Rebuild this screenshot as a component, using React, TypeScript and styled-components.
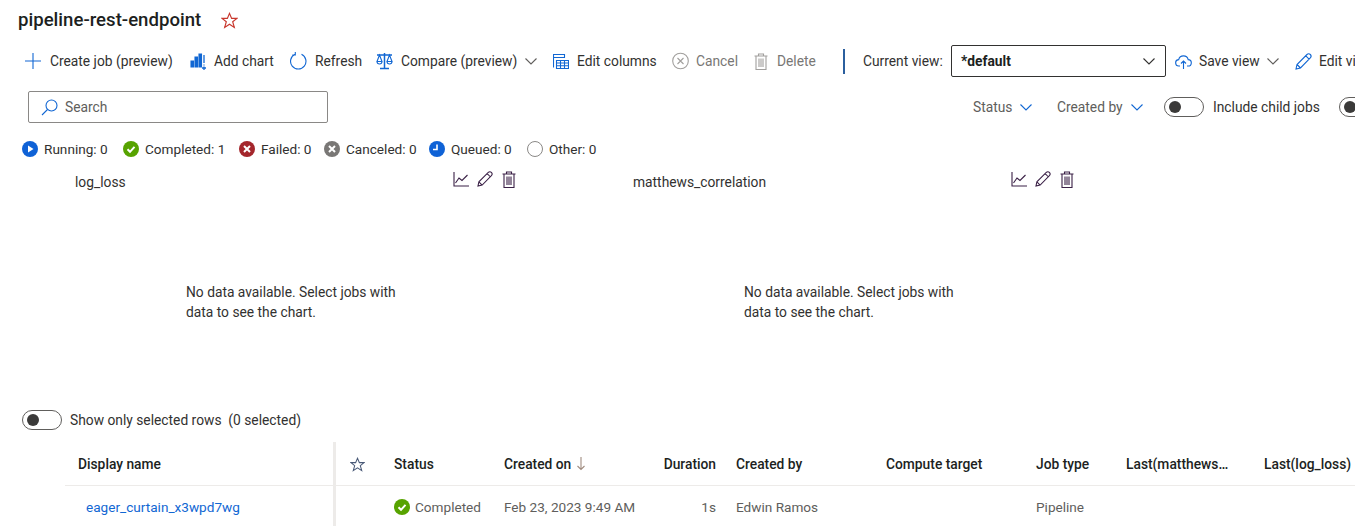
import styled, { createGlobalStyle } from "styled-components";

const GlobalStyle = createGlobalStyle`
  html, body {
    margin: 0;
    background: #fff;
  }
  body {
    font-family: Roboto, "Liberation Sans", sans-serif;
    font-size: 13.800px;
    color: #323130;
  }
`;

const BLUE = "#1267d3";

const Icon = styled.svg.attrs({ fill: "none" })<{ $color?: string }>`
  display: block;
  flex: none;
  stroke: ${(p) => p.$color || BLUE};
  stroke-width: 1.100;
`;

const PlusIcon = () => (
  <Icon width="18" height="18" viewBox="0 0 18 18" strokeWidth="1.4">
    <path d="M9 1v16M1 9h16" />
  </Icon>
);

const ChartIcon = () => (
  <Icon width="16" height="18" viewBox="0 0 16 18">
    <path d="M1 9h2.500v6H1zM5 5h2.500v10H5zM9 2h2.500v13H9z" fill={BLUE} />
    <path d="M14 3v8M14 12.500v1M12 16h4M14 14.500v3.500" strokeWidth="1.300" />
  </Icon>
);

const RefreshIcon = () => (
  <Icon width="17" height="18" viewBox="0 0 17 18">
    <path d="M5 2.300a7.700 7.700 0 1 0 6.500 0M5.300 0v3H2.300" />
  </Icon>
);

const CompareIcon = () => (
  <Icon width="17" height="18" viewBox="0 0 17 18">
    <path d="M1 3h15M8.500 1v15M4 16.500h9" strokeWidth="1.500" />
    <path d="M3.500 3 1 9.500h5zM13.500 3 11 9.500h5zM1 9.500a2.500 2.500 0 0 0 5 0M11 9.500a2.500 2.500 0 0 0 5 0" />
  </Icon>
);

const ColumnsIcon = () => (
  <Icon width="16" height="17" viewBox="0 0 16 17" strokeWidth="1.300">
    <path d="M.5 1.500h11v3H.5zM.5 4.500v10M3.500 7.500h12v8h-12zM3.500 10h12M3.500 12.700h12M7.500 7.500v8M11.500 7.500v8" />
  </Icon>
);

const CancelIcon = () => (
  <Icon width="17" height="18" viewBox="0 0 17 18" $color="#a19f9d">
    <circle cx="8.500" cy="9" r="7.800" />
    <path d="m5.500 6 6 6M11.500 6l-6 6" />
  </Icon>
);

const TrashIcon = ({ color }: { color: string }) => (
  <Icon width="16" height="17" viewBox="0 0 16 17" $color={color}>
    <path d="M1.500 3h13M5.500 3V1h5v2M3 3v13.500h10V3M6 5.500v8.500M8 5.500v8.500M10 5.500v8.500" />
  </Icon>
);

const CloudIcon = () => (
  <Icon width="17" height="17" viewBox="0 0 17 17">
    <path d="M5 13H4a3.200 3.200 0 0 1-.3-6.400 4.900 4.900 0 0 1 9.500 0 3.200 3.200 0 0 1-.2 6.400h-1M8.500 16V8M6 10.500 8.500 8l2.500 2.500" />
  </Icon>
);

const PencilIcon = ({ color, size }: { color: string; size: number }) => (
  <Icon width={size} height={size} viewBox="0 0 17 17" $color={color} strokeWidth="1.300">
    <path d="M1 16l1-4.500L12 1.500a2.200 2.200 0 0 1 3.300 3.300L5.500 15zM2 11.500 5.500 15M10.800 2.800l3.300 3.300" />
  </Icon>
);

const LineChartIcon = () => (
  <Icon width="16" height="16" viewBox="0 0 16 16" $color="#3a2046">
    <path d="M1 1v14h15M2.500 12 6 7l3 2.500L14.500 4" />
  </Icon>
);

const SearchIcon = () => (
  <Icon width="17" height="17" viewBox="0 0 17 17">
    <circle cx="10.500" cy="6.500" r="5.500" />
    <path d="M6.500 10.500 1 16" />
  </Icon>
);

const StarIcon = ({ color, size }: { color: string; size: number }) => (
  <Icon width={size} height={size} viewBox="0 0 16 16" $color={color}>
    <path d="M8 1.300 10 6h5l-4 3.200 1.500 5.300L8 11.500l-4.500 3L5 9.200 1 6h5z" />
  </Icon>
);

const Chevron = ({ color }: { color: string }) => (
  <Icon width="12" height="12" viewBox="0 0 12 12" $color={color}>
    <path d="M.5 3.500 6 9l5.500-5.500" />
  </Icon>
);

const Page = styled.div`
  width: 1355px;
  height: 526px;
  overflow: hidden;
  display: flex;
  flex-direction: column;
`;

const TitleRow = styled.div`
  display: flex;
  align-items: center;
  gap: 20px;
  padding: 8px 0 0 18px;
  height: 25px;
`;

const Title = styled.h1`
  margin: 0;
  font-size: 18.600px;
  font-weight: 500;
  color: #201f1e;
`;

const Toolbar = styled.div`
  display: flex;
  align-items: center;
  height: 32px;
  margin-top: 13px;
  padding-left: 24px;
  white-space: nowrap;
`;

const ToolButton = styled.div<{ $disabled?: boolean; $width: number; $gap?: number }>`
  display: flex;
  align-items: center;
  flex: none;
  gap: ${(p) => p.$gap ?? 8}px;
  width: ${(p) => p.$width}px;
  color: ${(p) => (p.$disabled ? "#797775" : "#323130")};
`;

const ToolDivider = styled.div`
  flex: none;
  width: 2px;
  height: 25px;
  background: #2b5f9e;
  margin: 0 18px 0 9px;
`;

const ViewLabel = styled.span`
  flex: none;
  width: 88px;
`;

const ViewSelect = styled.div`
  flex: none;
  box-sizing: border-box;
  display: flex;
  align-items: center;
  justify-content: space-between;
  width: 215px;
  height: 32px;
  margin-right: 9px;
  padding: 0 10px 0 9px;
  border: 1px solid #323130;
  border-radius: 2px;
  font-weight: 700;
  color: #201f1e;
`;

const FilterRow = styled.div`
  display: flex;
  align-items: center;
  height: 32px;
  margin-top: 14px;
  padding-left: 28px;
  white-space: nowrap;
`;

const SearchBox = styled.div`
  flex: none;
  box-sizing: border-box;
  display: flex;
  align-items: center;
  gap: 7px;
  width: 300px;
  height: 32px;
  padding-left: 12px;
  border: 1px solid #8a8886;
  border-radius: 2px;
  color: #605e5c;
`;

const Filters = styled.div`
  display: flex;
  align-items: center;
  margin-left: 645px;
  color: #605e5c;
`;

const FilterItem = styled.div<{ $width: number }>`
  display: flex;
  align-items: center;
  gap: 8px;
  flex: none;
  width: ${(p) => p.$width}px;
`;

const Toggle = styled.span`
  position: relative;
  flex: none;
  box-sizing: border-box;
  display: block;
  width: 40px;
  height: 20px;
  border: 1px solid #605e5c;
  border-radius: 10px;

  &::after {
    content: "";
    position: absolute;
    top: 3px;
    left: 4px;
    width: 12px;
    height: 12px;
    border-radius: 50%;
    background: #3b3a39;
  }
`;

const ToggleLabel = styled.span`
  flex: none;
  margin: 0 19px 0 9px;
  color: #323130;
`;

const StatusRow = styled.div`
  display: flex;
  align-items: center;
  height: 20px;
  margin-top: 16px;
  padding-left: 22px;
  font-size: 13.600px;
  white-space: nowrap;
`;

const StatusItem = styled.div<{ $width: number }>`
  display: flex;
  align-items: center;
  gap: 6px;
  flex: none;
  width: ${(p) => p.$width}px;
`;

const StatusDot = styled.svg.attrs({ viewBox: "0 0 16 16" })`
  display: block;
  flex: none;
  width: 16px;
  height: 16px;
`;

const RunningDot = () => (
  <StatusDot>
    <circle cx="8" cy="8" r="8" fill="#0f62d6" />
    <path d="M6 4.500v7L11.500 8z" fill="#fff" />
  </StatusDot>
);

const CompletedDot = () => (
  <StatusDot>
    <circle cx="8" cy="8" r="8" fill="#57a300" />
    <path d="M4.500 8.300 7 10.800l4.500-5" fill="none" stroke="#fff" strokeWidth="2" />
  </StatusDot>
);

const CrossDot = ({ color }: { color: string }) => (
  <StatusDot>
    <circle cx="8" cy="8" r="8" fill={color} />
    <path d="m5 5 6 6M11 5l-6 6" fill="none" stroke="#fff" strokeWidth="2" />
  </StatusDot>
);

const QueuedDot = () => (
  <StatusDot>
    <circle cx="8" cy="8" r="8" fill="#0f62d6" />
    <path d="M8 3.500V8.500H4" fill="none" stroke="#fff" strokeWidth="1.600" />
  </StatusDot>
);

const OtherDot = () => (
  <StatusDot>
    <circle cx="8" cy="8" r="7.500" fill="#fff" stroke="#8a8886" />
  </StatusDot>
);

const statuses = [
  { label: "Running: 0", dot: <RunningDot />, width: 101 },
  { label: "Completed: 1", dot: <CompletedDot />, width: 116 },
  { label: "Failed: 0", dot: <CrossDot color="#a4262c" />, width: 85 },
  { label: "Canceled: 0", dot: <CrossDot color="#797775" />, width: 105 },
  { label: "Queued: 0", dot: <QueuedDot />, width: 98 },
  { label: "Other: 0", dot: <OtherDot />, width: 90 },
];

const Charts = styled.div`
  display: flex;
  margin-top: 1px;
`;

const ChartCard = styled.section`
  flex: none;
  box-sizing: border-box;
  width: 558px;
  height: 250px;
  padding: 11px 0 0 75px;
`;

const ChartHeader = styled.div`
  display: flex;
  align-items: flex-start;
  width: 442px;
  color: #323130;
`;

const ChartName = styled.span`
  flex: 1;
  margin-top: 3px;
`;

const ChartActions = styled.div`
  display: flex;
  align-items: center;
  gap: 8px;
`;

const EmptyMessage = styled.p`
  width: 225px;
  margin: 92px 0 0 111px;
  line-height: 20px;
  color: #323130;
`;

const SelectedRow = styled.div`
  display: flex;
  align-items: center;
  height: 20px;
  padding-left: 22px;
  white-space: nowrap;

  ${ToggleLabel} {
    margin: 0 0 0 8px;
  }
`;

const TABLE_COLUMNS = "268px 3px 58px 110px 150px 82px 150px 150px 90px 138px 91px";

const HeaderRow = styled.div`
  display: grid;
  grid-template-columns: ${TABLE_COLUMNS};
  align-items: center;
  height: 42px;
  margin: 12px 0 0 65px;
  padding-top: 2px;
  border-bottom: 1px solid #edebe9;
  font-weight: 500;
  color: #201f1e;
  white-space: nowrap;
`;

const DataRow = styled.div`
  display: grid;
  grid-template-columns: ${TABLE_COLUMNS};
  align-items: center;
  height: 39px;
  margin-left: 65px;
  padding-top: 2px;
  font-size: 13.600px;
  color: #605e5c;
  white-space: nowrap;
`;

const ColumnDivider = styled.div`
  align-self: stretch;
  margin-top: -2px;
  background: #edebe9;
`;

const NameHeader = styled.div`
  padding-left: 13px;
`;

const StarCell = styled.div`
  padding-left: 14px;
`;

const SortCell = styled.div`
  display: flex;
  align-items: center;
  gap: 5px;
`;

const DurationCell = styled.div`
  padding-right: 20px;
  text-align: right;
`;

const NameLink = styled.a`
  padding-left: 21px;
  color: ${BLUE};
`;

const RowStatus = styled.div`
  display: flex;
  align-items: center;
  gap: 5px;
`;

const SortArrow = () => (
  <Icon width="10" height="14" viewBox="0 0 10 14" $color="#a08c80">
    <path d="M5 0v12.500M1.500 9 5 12.500 8.500 9" />
  </Icon>
);

const charts = ["log_loss", "matthews_correlation"];

export default function App() {
  return (
    <Page>
      <GlobalStyle />
      <TitleRow>
        <Title>pipeline-rest-endpoint</Title>
        <StarIcon color="#c8372d" size={17} />
      </TitleRow>

      <Toolbar>
        <ToolButton $width={166}><PlusIcon />Create job (preview)</ToolButton>
        <ToolButton $width={100}><ChartIcon />Add chart</ToolButton>
        <ToolButton $width={86}><RefreshIcon />Refresh</ToolButton>
        <ToolButton $width={177}><CompareIcon />Compare (preview)<Chevron color="#605e5c" /></ToolButton>
        <ToolButton $width={119}><ColumnsIcon />Edit columns</ToolButton>
        <ToolButton $width={81} $gap={7} $disabled><CancelIcon />Cancel</ToolButton>
        <ToolButton $width={81} $disabled><TrashIcon color="#a19f9d" />Delete</ToolButton>
        <ToolDivider />
        <ViewLabel>Current view:</ViewLabel>
        <ViewSelect>*default<Chevron color="#323130" /></ViewSelect>
        <ToolButton $width={120} $gap={7}><CloudIcon />Save view<Chevron color="#605e5c" /></ToolButton>
        <ToolButton $width={100} $gap={7}><PencilIcon color={BLUE} size={17} />Edit view</ToolButton>
      </Toolbar>

      <FilterRow>
        <SearchBox><SearchIcon />Search</SearchBox>
        <Filters>
          <FilterItem $width={84}>Status<Chevron color={BLUE} /></FilterItem>
          <FilterItem $width={107}>Created by<Chevron color={BLUE} /></FilterItem>
          <Toggle />
          <ToggleLabel>Include child jobs</ToggleLabel>
          <Toggle />
        </Filters>
      </FilterRow>

      <StatusRow>
        {statuses.map((status) => (
          <StatusItem key={status.label} $width={status.width}>
            {status.dot}
            {status.label}
          </StatusItem>
        ))}
      </StatusRow>

      <Charts>
        {charts.map((name) => (
          <ChartCard key={name}>
            <ChartHeader>
              <ChartName>{name}</ChartName>
              <ChartActions>
                <LineChartIcon />
                <PencilIcon color="#3a2046" size={16} />
                <TrashIcon color="#3a2046" />
              </ChartActions>
            </ChartHeader>
            <EmptyMessage>
              No data available. Select jobs with data to see the chart.
            </EmptyMessage>
          </ChartCard>
        ))}
      </Charts>

      <SelectedRow>
        <Toggle />
        <ToggleLabel>Show only selected rows&nbsp; (0 selected)</ToggleLabel>
      </SelectedRow>

      <HeaderRow>
        <NameHeader>Display name</NameHeader>
        <ColumnDivider />
        <StarCell><StarIcon color="#4a5a78" size={15} /></StarCell>
        <div>Status</div>
        <SortCell>Created on<SortArrow /></SortCell>
        <DurationCell>Duration</DurationCell>
        <div>Created by</div>
        <div>Compute target</div>
        <div>Job type</div>
        <div>Last(matthews…</div>
        <div>Last(log_loss)</div>
      </HeaderRow>

      <DataRow>
        <NameLink>eager_curtain_x3wpd7wg</NameLink>
        <ColumnDivider />
        <div />
        <RowStatus><CompletedDot />Completed</RowStatus>
        <div>Feb 23, 2023 9:49 AM</div>
        <DurationCell>1s</DurationCell>
        <div>Edwin Ramos</div>
        <div />
        <div>Pipeline</div>
        <div />
        <div />
      </DataRow>
    </Page>
  );
}
